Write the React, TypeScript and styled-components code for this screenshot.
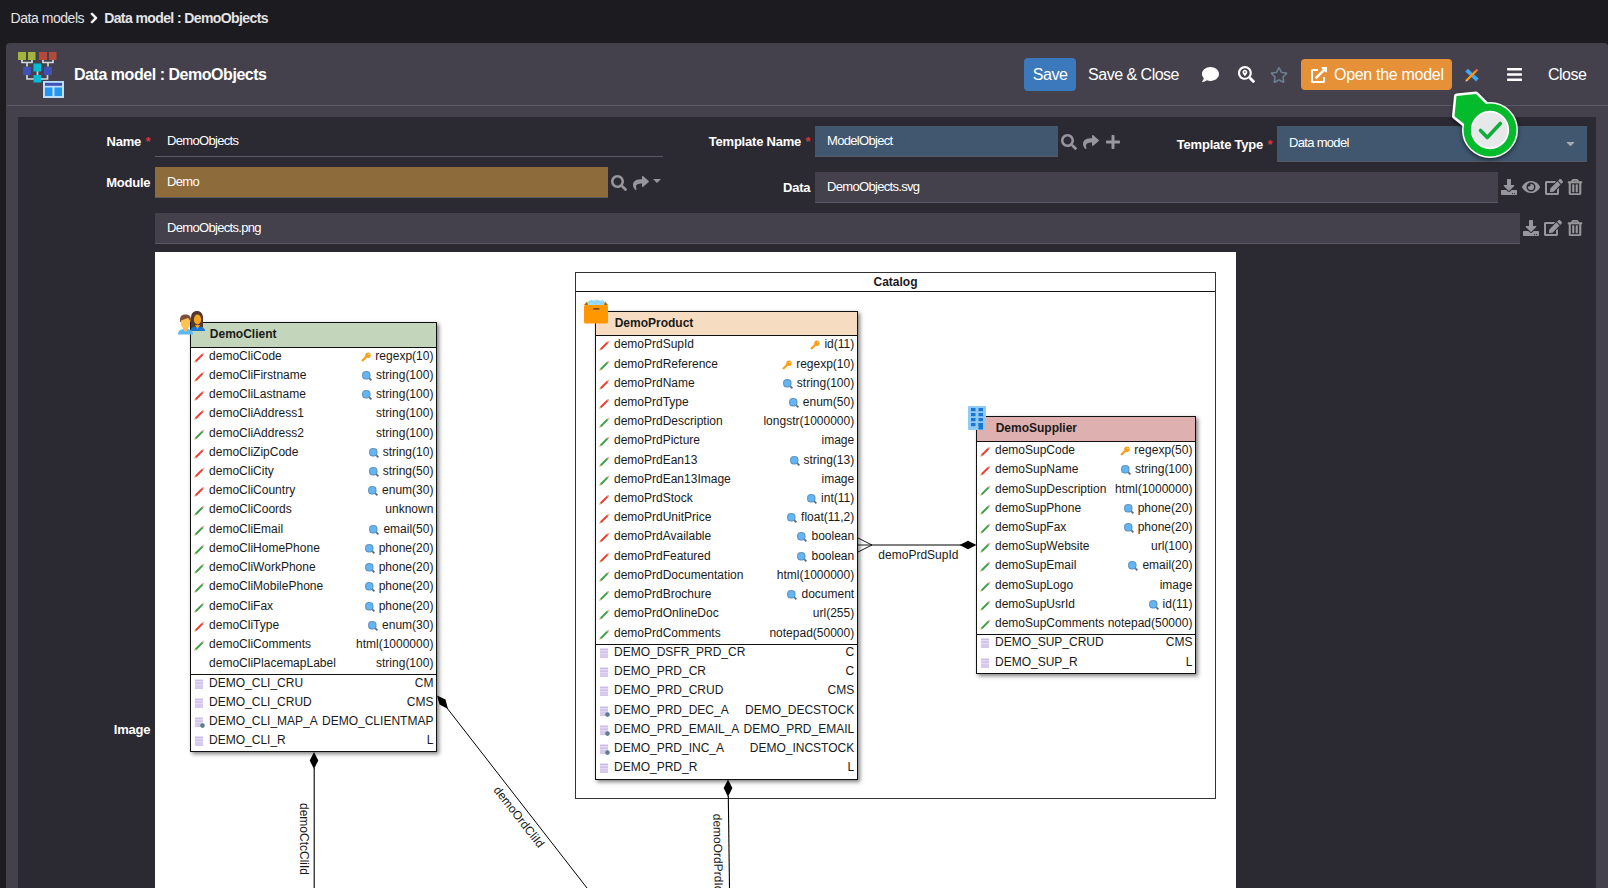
import React from "react";
import styled, { createGlobalStyle, css } from "styled-components";
import {
    FaBars,
    FaCaretDown,
    FaChevronRight,
    FaComment,
    FaDownload,
    FaEdit,
    FaExternalLinkAlt,
    FaEye,
    FaPlus,
    FaRegStar,
    FaRegTrashAlt,
    FaSearch,
    FaSearchLocation,
    FaShare,
} from "react-icons/fa";

type TypeIcon = "key" | "search";

// name, type, required / optional / computed, icon shown before the type
type Attribute = [string, string, "req" | "opt" | "none", TypeIcon?];

// name, rights or action, linked to an action
type Grant = [string, string, boolean?];

interface Entity {
    name: string;
    color: string;
    left: number;
    top: number;
    width: number;
    attributes: Attribute[];
    grants: Grant[];
}

const client: Entity = {
    name: "DemoClient",
    color: "#c3d5bb",
    left: 35.3,
    top: 70,
    width: 246.7,
    attributes: [
        ["demoCliCode", "regexp(10)", "req", "key"],
        ["demoCliFirstname", "string(100)", "req", "search"],
        ["demoCliLastname", "string(100)", "req", "search"],
        ["demoCliAddress1", "string(100)", "req"],
        ["demoCliAddress2", "string(100)", "opt"],
        ["demoCliZipCode", "string(10)", "req", "search"],
        ["demoCliCity", "string(50)", "req", "search"],
        ["demoCliCountry", "enum(30)", "req", "search"],
        ["demoCliCoords", "unknown", "opt"],
        ["demoCliEmail", "email(50)", "opt", "search"],
        ["demoCliHomePhone", "phone(20)", "opt", "search"],
        ["demoCliWorkPhone", "phone(20)", "opt", "search"],
        ["demoCliMobilePhone", "phone(20)", "opt", "search"],
        ["demoCliFax", "phone(20)", "opt", "search"],
        ["demoCliType", "enum(30)", "req", "search"],
        ["demoCliComments", "html(1000000)", "opt"],
        ["demoCliPlacemapLabel", "string(100)", "none"],
    ],
    grants: [
        ["DEMO_CLI_CRU", "CM"],
        ["DEMO_CLI_CRUD", "CMS"],
        ["DEMO_CLI_MAP_A", "DEMO_CLIENTMAP", true],
        ["DEMO_CLI_R", "L"],
    ],
};

const product: Entity = {
    name: "DemoProduct",
    color: "#f6dcc0",
    left: 440.2,
    top: 58.6,
    width: 262.6,
    attributes: [
        ["demoPrdSupId", "id(11)", "req", "key"],
        ["demoPrdReference", "regexp(10)", "opt", "key"],
        ["demoPrdName", "string(100)", "req", "search"],
        ["demoPrdType", "enum(50)", "req", "search"],
        ["demoPrdDescription", "longstr(1000000)", "opt"],
        ["demoPrdPicture", "image", "opt"],
        ["demoPrdEan13", "string(13)", "opt", "search"],
        ["demoPrdEan13Image", "image", "opt"],
        ["demoPrdStock", "int(11)", "req", "search"],
        ["demoPrdUnitPrice", "float(11,2)", "req", "search"],
        ["demoPrdAvailable", "boolean", "req", "search"],
        ["demoPrdFeatured", "boolean", "req", "search"],
        ["demoPrdDocumentation", "html(1000000)", "opt"],
        ["demoPrdBrochure", "document", "opt", "search"],
        ["demoPrdOnlineDoc", "url(255)", "opt"],
        ["demoPrdComments", "notepad(50000)", "opt"],
    ],
    grants: [
        ["DEMO_DSFR_PRD_CR", "C"],
        ["DEMO_PRD_CR", "C"],
        ["DEMO_PRD_CRUD", "CMS"],
        ["DEMO_PRD_DEC_A", "DEMO_DECSTOCK", true],
        ["DEMO_PRD_EMAIL_A", "DEMO_PRD_EMAIL", true],
        ["DEMO_PRD_INC_A", "DEMO_INCSTOCK", true],
        ["DEMO_PRD_R", "L"],
    ],
};

const supplier: Entity = {
    name: "DemoSupplier",
    color: "#dfb0b0",
    left: 821.2,
    top: 164.4,
    width: 219.8,
    attributes: [
        ["demoSupCode", "regexp(50)", "req", "key"],
        ["demoSupName", "string(100)", "req", "search"],
        ["demoSupDescription", "html(1000000)", "opt"],
        ["demoSupPhone", "phone(20)", "opt", "search"],
        ["demoSupFax", "phone(20)", "opt", "search"],
        ["demoSupWebsite", "url(100)", "opt"],
        ["demoSupEmail", "email(20)", "opt", "search"],
        ["demoSupLogo", "image", "opt"],
        ["demoSupUsrId", "id(11)", "opt", "search"],
        ["demoSupComments", "notepad(50000)", "opt"],
    ],
    grants: [
        ["DEMO_SUP_CRUD", "CMS"],
        ["DEMO_SUP_R", "L"],
    ],
};

const Pencil: React.FC<{ color: string }> = ({ color }) => (
    <svg width="11" height="11" viewBox="0 0 11 11">
        <path d="M1.800 9.200 8.900 2.100" stroke={color} strokeWidth="2" />
        <path d="M8.500 2.500 9.900 1.100" stroke="#f3b8b8" strokeWidth="2" />
        <path d="M.2 10.800 1 8.600 2.500 10.100Z" fill="#c9a24a" />
    </svg>
);

const KeyIcon = () => (
    <svg width="10" height="10" viewBox="0 0 10 10">
        <path d="M1 9 6.4 3.6" stroke="#f9a01b" strokeWidth="2.2" />
        <circle cx="7" cy="3.2" r="2.7" fill="#f9a01b" />
        <circle cx="7.9" cy="2.3" r=".6" fill="#fff" />
    </svg>
);

const Magnifier = () => (
    <svg width="10" height="10" viewBox="0 0 10 10">
        <path d="M6.6 6.6 9.4 9.4" stroke="#56697a" strokeWidth="1.7" />
        <rect x=".6" y=".6" width="7.4" height="7.4" rx="2.6" fill="#64b5f6" stroke="#5b87ab" strokeWidth=".9" />
    </svg>
);

const GrantIcon: React.FC<{ action?: boolean }> = ({ action }) => (
    <svg width="11" height="11" viewBox="-.5 0 11 11">
        <rect x=".5" y=".5" width="8" height="9" fill="#e2d9f2" />
        <path d="M.5 1.4h8M.5 4.2h8M.5 7h8M.5 9.2h8" stroke="#cbbbe6" strokeWidth="1.2" />
        {action && <circle cx="8" cy="8.6" r="2.3" fill="#607d8b" />}
    </svg>
);

const ModelIcon = () => (
    <svg width="47" height="48" viewBox="0 0 47 48">
        <g fill="none" stroke="#cfd8dc" strokeWidth="1.7">
            <path d="M4 9v3.5h10V9M9 12.5v4M25 9v3.5h10V9M30 12.5v4M9 24v5h20.500V24M19.500 20v6" />
        </g>
        <path d="M0 2h8v8H0zM10 2h7.500v8H10z" fill="#a3b53b" />
        <path d="M21 2h8v8h-8zM31 2h7.500v8H31z" fill="#b64a3a" />
        <path d="M5 17h8v8H5zM26 17h8v8h-8z" fill="#3f51b5" />
        <path d="M15.500 13.500H23v8h-7.500zM15.500 25H23v7.500h-7.500z" fill="#00bcd4" />
        <rect x="25" y="31" width="21" height="17" fill="#bbdefb" />
        <path d="M27 32.800h17v3H27z" fill="#3f51b5" />
        <path d="M27 37.600h7.400V46H27zM36.500 37.600H44V46h-7.500z" fill="#2196f3" />
    </svg>
);

const DesignIcon = () => (
    <svg width="14" height="14" viewBox="0 0 14 14">
        <path d="M1.600 2.200 12.400 12" stroke="#42a5f5" strokeWidth="3.800" />
        <path d="M1.500 12.500 11 3" stroke="#ff9800" strokeWidth="2.300" />
        <path d="M11 3l1.400-1.400" stroke="#e57373" strokeWidth="2.200" />
        <path d="M.4 13.600 1 11.400 2.600 13Z" fill="#ffe0b2" />
    </svg>
);

const PeopleIcon = () => (
    <svg width="27" height="24" viewBox="0 0 27 24">
        <path d="M13 20V7c0-5 2.500-7 6-7s6 2.500 6 7v9l-4 4z" fill="#543930" />
        <ellipse cx="19.500" cy="8.500" rx="3.600" ry="5" fill="#f5a623" />
        <path d="M12.500 20c0-3.200 2.500-4.500 7-4.500S27 16.800 27 20z" fill="#1976d2" />
        <path d="M17 14h5l-2.500 4z" fill="#f5a623" />
        <path d="M2 9c0-4 2-5.500 5.500-5.500S13 5 13 9v2H2z" fill="#7a5138" />
        <path d="M3 9.500 10 7l2 2.500v3.500c0 3-2 4.500-4.500 4.500S3 15.500 3 13z" fill="#ffc24d" />
        <path d="M0 23.500C0 19.500 3 18 7.500 18s7.500 1.500 7.500 5.500z" fill="#5bb8f0" />
        <path d="M5 16.500h5v2L7.500 21 5 18.500z" fill="#ffb74d" />
    </svg>
);

const BoxIcon = () => (
    <svg width="24" height="25" viewBox="0 0 24 25">
        <path d="M2 6 4 2.500 7 .8l2 1L12 .5l4 1.300 3-1L21 4l1 2z" fill="#9edcf7" />
        <path d="m5 4 3-2 3 3 4-3 2 3 3-2" stroke="#7fcdef" fill="none" />
        <path d="M0 6 3 2.500 4 6zM24 6l-3-3.500L20 6z" fill="#b36b00" />
        <rect y="6" width="24" height="18.500" rx="1.500" fill="#ff9800" />
        <rect x="9" y="9" width="6.500" height="1.800" rx=".9" fill="#8a4b08" />
    </svg>
);

const BuildingIcon = () => (
    <svg width="18" height="24" viewBox="0 0 18 24">
        <rect width="18" height="24" rx="1" fill="#90caf9" />
        <g fill="#1976d2">
            {[2, 7, 12, 17].map((y) => (
                <React.Fragment key={y}>
                    <rect x="3" y={y} width="4.500" height="3.200" />
                    <rect x="10.500" y={y} width="4.500" height="3.200" />
                </React.Fragment>
            ))}
            <rect x="10.500" y="17" width="4.500" height="6.500" />
        </g>
    </svg>
);

const Pointer = () => (
    <svg width="72" height="76" viewBox="1446 87 72 76">
        <g fill="none" stroke="#fff" strokeWidth="5" strokeLinejoin="round">
            <circle cx="1490" cy="130" r="25.500" />
            <path d="M1456.500 96 1476 94 1487 105 1464 124 1454.500 116.200Z" />
        </g>
        <circle cx="1490" cy="130" r="26.500" fill="#04bb2c" />
        <path d="M1456.500 96 1476 94 1490 108 1468 127 1454.500 116.200Z" fill="#04bb2c" />
        <circle cx="1490" cy="130" r="18.300" fill="#e7e8ea" stroke="#fff" strokeWidth="1.700" />
        <path
            d="M1480.500 130.500 1487.300 137.500 1500.300 123.500"
            fill="none"
            stroke="#0fae3a"
            strokeWidth="3.600"
            strokeLinecap="round"
            strokeLinejoin="round"
        />
    </svg>
);

const EntityBox: React.FC<{ entity: Entity }> = ({ entity }) => (
    <EntityFrame
        $left={entity.left}
        $top={entity.top}
        $width={entity.width}
    >
        <EntityTitle $color={entity.color}>{entity.name}</EntityTitle>
        {entity.attributes.map(([name, type, kind, icon]) => (
            <EntityRow key={name}>
                <RowIcon>
                    {kind !== "none" && (
                        <Pencil color={kind === "req" ? "#ee3a30" : "#3f9f48"} />
                    )}
                </RowIcon>
                <span>{name}</span>
                <RowType>
                    {icon === "key" && <KeyIcon />}
                    {icon === "search" && <Magnifier />}
                    {type}
                </RowType>
            </EntityRow>
        ))}
        <Separator />
        {entity.grants.map(([name, rights, action]) => (
            <EntityRow key={name}>
                <RowIcon>
                    <GrantIcon action={action} />
                </RowIcon>
                <span>{name}</span>
                <RowType>{rights}</RowType>
            </EntityRow>
        ))}
    </EntityFrame>
);

const Links = () => (
    <LinksLayer width="1081" height="636" viewBox="155 252 1081 636">
        <g stroke="#000" fill="none" strokeWidth="1">
            <path d="M872 545H961" />
            <path d="M858 538 872 545 858 552M858 545H872" strokeWidth=".9" />
            <path d="M314.200 768V888" strokeWidth="1.100" />
            <path d="M447 708 587 888" />
            <path d="M728.300 796 729.500 888" strokeWidth="1.100" />
        </g>
        <path d="M959.500 545 968 540.800 976.500 545 968 549.200Z" />
        <path d="M314 752 318.300 760.500 314 769 309.700 760.500Z" />
        <path d="M437 695.500 445.500 699.500 448 709 439.500 704.500Z" />
        <path d="M728 779.500 732.400 788 728 797 723.700 788Z" />
    </LinksLayer>
);

const Diagram = () => (
    <Canvas>
        <Domain>
            <DomainTitle>Catalog</DomainTitle>
        </Domain>
        <Links />
        <EntityBox entity={client} />
        <EntityBox entity={product} />
        <EntityBox entity={supplier} />
        <Pin $left={23} $top={58.500}>
            <PeopleIcon />
        </Pin>
        <Pin $left={429} $top={47}>
            <BoxIcon />
        </Pin>
        <Pin $left={813} $top={153.500}>
            <BuildingIcon />
        </Pin>
        <LinkLabel $x={763.400} $y={302.500}>demoPrdSupId</LinkLabel>
        <LinkLabel $x={149} $y={587} $angle={90}>demoCtcCliId</LinkLabel>
        <LinkLabel $x={363.500} $y={565} $angle={52}>demoOrdCliId</LinkLabel>
        <LinkLabel $x={562.800} $y={601} $angle={89}>demoOrdPrdId</LinkLabel>
    </Canvas>
);

const App = () => (
    <Page>
        <GlobalStyle />
        <Breadcrumb>
            <span>Data models</span>
            <FaChevronRight size={12} color="#fff" />
            <b>Data model : DemoObjects</b>
        </Breadcrumb>
        <Panel>
            <PanelHeader>
                <ModelIcon />
                <Title>Data model : DemoObjects</Title>
                <Toolbar>
                    <Button $variant="primary">Save</Button>
                    <Button>Save &amp; Close</Button>
                    <ToolIcon $width={18} $after={18}>
                        <FaComment size={17} />
                    </ToolIcon>
                    <ToolIcon $width={18} $after={15}>
                        <FaSearchLocation size={17} />
                    </ToolIcon>
                    <ToolIcon $width={18} $after={13}>
                        <FaRegStar size={18} color="#6c7f93" />
                    </ToolIcon>
                    <Button $variant="warning">
                        <FaExternalLinkAlt size={16} />
                        Open the model
                    </Button>
                    <ToolIcon $width={14} $after={28}>
                        <DesignIcon />
                    </ToolIcon>
                    <ToolIcon $width={15} $after={26}>
                        <FaBars size={17} />
                    </ToolIcon>
                    <CloseText>Close</CloseText>
                    <PointerAnchor>
                        <Pointer />
                    </PointerAnchor>
                </Toolbar>
            </PanelHeader>
            <Form>
                <Groups>
                    <Group $width={644}>
                        <Field>
                            <Label $width={137}>
                                Name <Star>*</Star>
                            </Label>
                            <Input $width={508} $tone="plain">DemoObjects</Input>
                        </Field>
                        <Field>
                            <Label $width={137}>Module</Label>
                            <Input $width={453} $tone="brown">Demo</Input>
                            <Actions>
                                <FaSearch />
                                <FaShare />
                                <SmallCaret />
                            </Actions>
                        </Field>
                    </Group>
                    <Group $width={934}>
                        <FieldLine>
                            <Field>
                                <Label $width={153}>
                                    Template Name <Star>*</Star>
                                </Label>
                                <Input $width={243} $tone="blue">ModelObject</Input>
                                <Actions>
                                    <FaSearch />
                                    <FaShare />
                                    <FaPlus />
                                </Actions>
                            </Field>
                            <Field>
                                <Label $width={140}>
                                    Template Type <Star>*</Star>
                                </Label>
                                <Select>
                                    Data model
                                    <FaCaretDown size={13} />
                                </Select>
                            </Field>
                        </FieldLine>
                        <Field>
                            <Label $width={153}>Data</Label>
                            <Input $width={683}>DemoObjects.svg</Input>
                            <FileActions>
                                <FaDownload />
                                <FaEye className="wide" />
                                <FaEdit className="wide" />
                                <FaRegTrashAlt className="bold" />
                            </FileActions>
                        </Field>
                    </Group>
                </Groups>
                <ImageField>
                    <Label $width={137}>Image</Label>
                    <ImageContent>
                        <Field>
                            <Input $width={1365}>DemoObjects.png</Input>
                            <FileActions>
                                <FaDownload />
                                <FaEdit className="wide" />
                                <FaRegTrashAlt className="bold" />
                            </FileActions>
                        </Field>
                        <Diagram />
                    </ImageContent>
                </ImageField>
            </Form>
        </Panel>
    </Page>
);

export default App;

const GlobalStyle = createGlobalStyle`
    * {
        box-sizing: border-box;
    }
    body {
        margin: 0;
        background: #1c1b20;
        overflow: hidden;
    }
    svg {
        display: block;
        flex: none;
    }
`;

const Page = styled.div`
    display: flex;
    flex-direction: column;
    height: 888px;
    overflow: hidden;
    color: #fff;
    font-family: "Liberation Sans", Arial, sans-serif;
    font-size: 13px;
    white-space: nowrap;
`;

const Breadcrumb = styled.div`
    display: flex;
    align-items: center;
    gap: 4px;
    height: 43px;
    padding: 0 0 7px 10.5px;
    flex: none;
    color: #e4e3e6;
    font-size: 14px;
    letter-spacing: -0.45px;

    svg {
        stroke: currentColor;
        stroke-width: 30px;
    }

    b {
        letter-spacing: -0.6px;
    }
`;

const Panel = styled.div`
    display: flex;
    flex-direction: column;
    flex: none;
    height: 1260px;
    margin-left: 6px;
    padding-left: 1px;
    background: #44414d;
    border-radius: 4px 4px 0 0;
`;

const PanelHeader = styled.div`
    display: flex;
    align-items: center;
    height: 63px;
    padding: 0 21px 0 11px;
    border-bottom: 1px solid #5c5966;
`;

const Title = styled.div`
    margin-left: 9px;
    padding-top: 1px;
    font-size: 16px;
    font-weight: bold;
    letter-spacing: -0.46px;
`;

const Toolbar = styled.div`
    position: relative;
    display: flex;
    align-items: center;
    margin-left: auto;
    padding-top: 1px;
    font-size: 16px;
    letter-spacing: -0.5px;
`;

const Button = styled.div<{ $variant?: "primary" | "warning" }>`
    display: flex;
    align-items: center;
    height: 33px;
    margin-right: 22px;
    border-radius: 4px;

    ${({ $variant }) =>
        $variant === "primary" &&
        css`
            width: 52px;
            justify-content: center;
            margin-right: 12px;
            background: #3c78bc;
        `}

    ${({ $variant }) =>
        $variant === "warning" &&
        css`
            width: 151px;
            height: 31px;
            gap: 7px;
            padding-left: 10px;
            margin-right: 13px;
            background: #e69138;
            letter-spacing: -0.3px;
        `}
`;

const ToolIcon = styled.div<{ $width: number; $after: number }>`
    display: flex;
    justify-content: center;
    width: ${({ $width }) => $width}px;
    margin-right: ${({ $after }) => $after}px;
`;

const CloseText = styled.div`
    width: 39px;
`;

const PointerAnchor = styled.div`
    position: absolute;
    right: 69px;
    top: 30px;
    z-index: 2;
    filter: drop-shadow(0 2px 2px rgba(0, 0, 0, 0.5));
`;

const Form = styled.div`
    display: flex;
    flex-direction: column;
    gap: 10px;
    flex: 1;
    margin: 11px 12px 0 11px;
    padding-top: 9px;
    background: #2b2932;
`;

const Groups = styled.div`
    display: flex;
`;

const Group = styled.div<{ $width: number }>`
    display: flex;
    flex-direction: column;
    gap: 10px;
    width: ${({ $width }) => $width}px;
`;

const FieldLine = styled.div`
    display: flex;
    align-items: flex-start;
    justify-content: space-between;
    padding-right: 9px;
`;

const Field = styled.div`
    display: flex;
    align-items: center;
`;

const Label = styled.div<{ $width: number }>`
    width: ${({ $width }) => $width}px;
    flex: none;
    padding-right: 4.7px;
    text-align: right;
    font-weight: bold;
    letter-spacing: -0.22px;
`;

const Star = styled.span`
    margin-left: 1px;
    color: #d9363e;
`;

const tones = {
    plain: "transparent",
    brown: "#8d6b3b",
    blue: "#40576f",
    grey: "#44414d",
};

const Input = styled.div<{ $width: number; $tone?: keyof typeof tones }>`
    width: ${({ $width }) => $width}px;
    height: 31px;
    flex: none;
    padding-left: 12px;
    border-bottom: 1px solid #5b5965;
    background: ${({ $tone = "grey" }) => tones[$tone]};
    line-height: 29px;
    letter-spacing: -0.68px;
`;

const Select = styled.div`
    display: flex;
    align-items: center;
    justify-content: space-between;
    width: 310px;
    height: 36px;
    padding: 0 10px 3px 12px;
    border-bottom: 1px solid #5b5965;
    background: #40576f;
    letter-spacing: -0.68px;

    svg {
        margin-top: 2px;
        color: #a6aab3;
    }
`;

const Actions = styled.div`
    display: flex;
    align-items: center;
    gap: 6px;
    margin-left: 3px;
    color: #97969c;

    svg {
        width: 16px;
        height: 16px;
    }
`;

const FileActions = styled(Actions)`
    gap: 4.8px;
    padding-bottom: 2px;

    .wide {
        width: 18px;
    }
    .bold {
        stroke: currentColor;
        stroke-width: 20px;
    }
`;

const SmallCaret = styled.i`
    margin: -3px 0 0 -2px;
    border: 4px solid transparent;
    border-top-color: #97969c;
    border-bottom: 0;
`;

const ImageField = styled.div`
    display: flex;
    align-items: center;
`;

const ImageContent = styled.div`
    display: flex;
    flex-direction: column;
    gap: 8px;
`;

const Canvas = styled.div`
    position: relative;
    width: 1081px;
    height: 994px;
    background: #fff;
    color: #1a1a1a;
    font-size: 12px;
`;

const Domain = styled.div`
    position: absolute;
    left: 420px;
    top: 20px;
    width: 641px;
    height: 527px;
    border: 1px solid #333;
`;

const DomainTitle = styled.div`
    height: 19px;
    border-bottom: 1px solid #111;
    text-align: center;
    font-weight: bold;
    line-height: 18px;
`;

const EntityFrame = styled.div<{ $left: number; $top: number; $width: number }>`
    position: absolute;
    left: ${({ $left }) => $left}px;
    top: ${({ $top }) => $top}px;
    width: ${({ $width }) => $width}px;
    border: 1px solid #111;
    background: #fff;
    box-shadow: 2px 2px 4px rgba(0, 0, 0, 0.5);
`;

const EntityTitle = styled.div<{ $color: string }>`
    height: 24.7px;
    padding-left: 18.5px;
    border-bottom: 1px solid #111;
    background: ${({ $color }) => $color};
    font-weight: bold;
    line-height: 22px;
`;

const EntityRow = styled.div`
    display: flex;
    height: 19.23px;
    padding-right: 2.6px;
    line-height: 16px;
`;

const RowIcon = styled.div`
    width: 17.8px;
    padding: 4px 0 0 3px;
`;

const RowType = styled.div`
    display: flex;
    gap: 4px;
    margin-left: auto;

    svg {
        margin-top: 4px;
    }
`;

const Separator = styled.div`
    height: 1px;
    margin-bottom: -0.8px;
    background: #111;
`;

const LinksLayer = styled.svg`
    position: absolute;
    left: 0;
    top: 0;
`;

const Pin = styled.div<{ $left: number; $top: number }>`
    position: absolute;
    left: ${({ $left }) => $left}px;
    top: ${({ $top }) => $top}px;
`;

// centred on its point, so that a turned label stays where it is put
const LinkLabel = styled.div<{ $x: number; $y: number; $angle?: number }>`
    position: absolute;
    left: ${({ $x }) => $x}px;
    top: ${({ $y }) => $y}px;
    transform: translate(-50%, -50%) rotate(${({ $angle = 0 }) => $angle}deg);
`;
